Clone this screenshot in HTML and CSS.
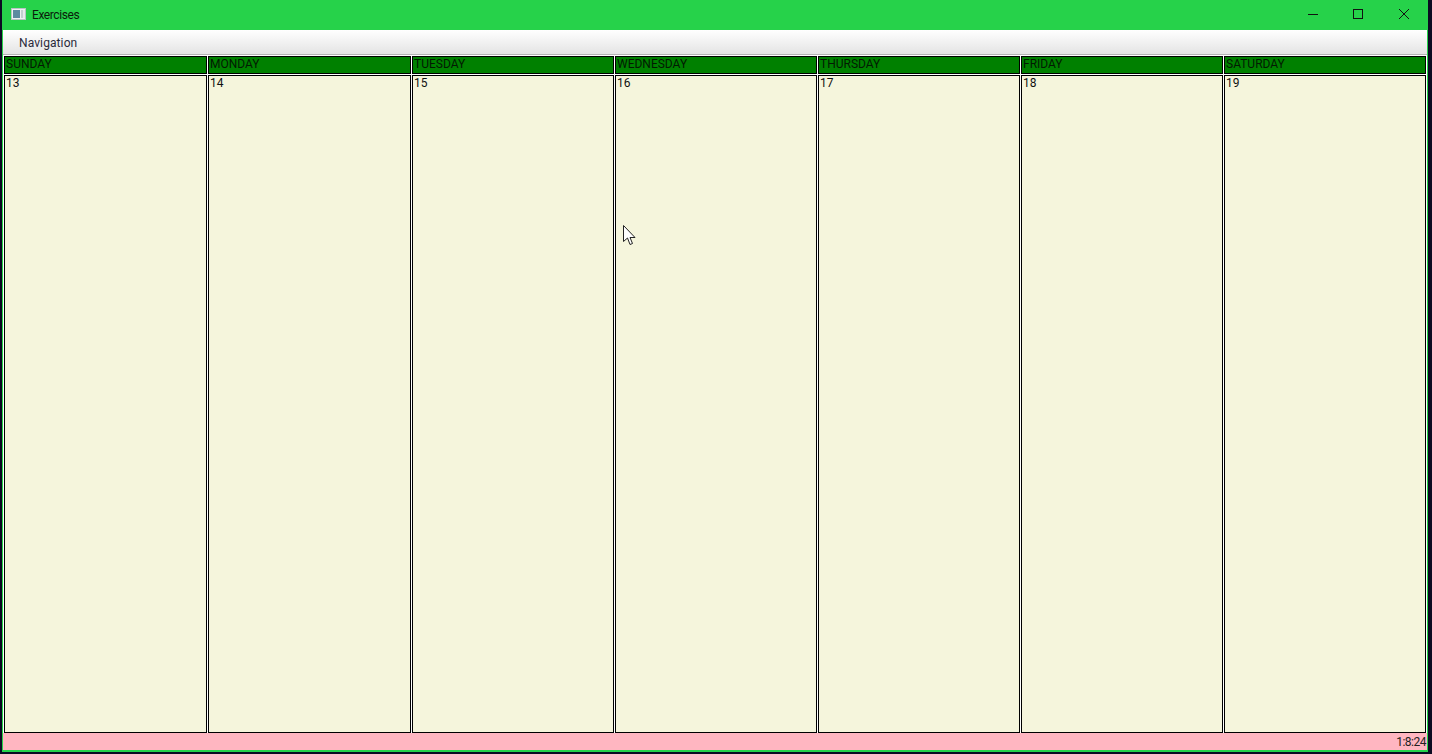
FILE: index.html
```html
<!DOCTYPE html>
<html lang="en">
<head>
<meta charset="utf-8">
<title>Exercises</title>
<link rel="stylesheet" href="styles.css">
</head>
<body>
<div class="window">
  <header class="titlebar">
    <svg class="app-icon" width="16" height="16" viewBox="0 0 16 16">
      <rect x="0.5" y="1.5" width="14" height="11" fill="#eef1f1" stroke="#b9c4c4"/>
      <rect x="2" y="3" width="7" height="8" fill="#5d8aa0"/>
      <rect x="10" y="3" width="2" height="8" fill="#c3cfcf"/>
      <rect x="12.5" y="3" width="1" height="8" fill="#dde4e4"/>
    </svg>
    <span class="title">Exercises</span>
    <div class="controls">
      <span class="control"><svg width="12" height="12" viewBox="0 0 12 12"><path d="M2 5.5h10" stroke="#111" fill="none"/></svg></span>
      <span class="control"><svg width="12" height="12" viewBox="0 0 12 12"><rect x="1.5" y="0.5" width="9" height="9" stroke="#111" fill="none"/></svg></span>
      <span class="control"><svg width="12" height="12" viewBox="0 0 12 12"><path d="M1 0l10 10M11 0L1 10" stroke="#111" fill="none"/></svg></span>
    </div>
  </header>
  <nav class="menubar"><span class="menu-item">Navigation</span></nav>
  <main class="calendar">
    <div class="day-col"><div class="day-head">SUNDAY</div><div class="day-cell">13</div></div>
    <div class="day-col"><div class="day-head">MONDAY</div><div class="day-cell">14</div></div>
    <div class="day-col"><div class="day-head">TUESDAY</div><div class="day-cell">15</div></div>
    <div class="day-col"><div class="day-head">WEDNESDAY</div><div class="day-cell">16</div></div>
    <div class="day-col"><div class="day-head">THURSDAY</div><div class="day-cell">17</div></div>
    <div class="day-col"><div class="day-head">FRIDAY</div><div class="day-cell">18</div></div>
    <div class="day-col"><div class="day-head">SATURDAY</div><div class="day-cell">19</div></div>
  </main>
  <footer class="statusbar">1:8:24</footer>
</div>
<svg class="cursor" width="13" height="21" viewBox="0 0 13 21">
  <path d="M0.5 0.5V16.5L4.5 13L7 19.5L9.5 18.5L7 12.5H12L0.5 0.5Z" fill="#fff" stroke="#222"/>
</svg>
</body>
</html>
```
FILE: styles.css
```css
* { box-sizing: border-box; }
html, body { height: 100%; }
body {
  margin: 0;
  background: #0b0b22;
  font-family: Roboto, "Open Sans", sans-serif;
  font-size: 12px;
  color: #111;
  overflow: hidden;
  position: relative;
}
.window {
  height: 752px;
  margin-left: 2px;
  width: 1426px;
  background: #26d24a;
  display: flex;
  flex-direction: column;
  padding: 0 1px 2px;
}
.titlebar {
  height: 30px;
  flex: none;
  display: flex;
  align-items: center;
  padding-left: 9px;
  margin: 0 -1px;
}
.app-icon { flex: none; }
.title { margin-left: 5px; line-height: 16px; color: #0a1a0a; letter-spacing: -0.4px; }
.controls { margin-left: auto; display: flex; margin-right: 1px; }
.control {
  width: 46px;
  height: 30px;
  display: flex;
  align-items: center;
  justify-content: center;
}
.menubar {
  height: 25px;
  flex: none;
  background: linear-gradient(#ffffff, #e4e4e4);
  border-bottom: 1px solid #b4b4b4;
  display: flex;
  align-items: center;
  padding: 1px 0 0 16px;
}
.menu-item { color: #2a2a3a; letter-spacing: 0.1px; }
.calendar {
  flex: 1;
  min-height: 0;
  background: #fff;
  display: grid;
  grid-template-columns: 203px 203px repeat(5, 202px);
  gap: 0 1px;
  padding: 1px 0 0 1px;
}
.day-col {
  display: flex;
  flex-direction: column;
  gap: 1px;
  min-width: 0;
}
.day-head {
  height: 18px;
  flex: none;
  background: #008000;
  border: 1px solid #000;
  line-height: 14px;
  padding-left: 1px;
  color: #031a03;
}
.day-cell {
  flex: 1;
  background: #f5f5dc;
  border: 1px solid #000;
  line-height: 14px;
  padding-left: 1px;
}
.statusbar {
  height: 17px;
  flex: none;
  background: #ffb6c1;
  text-align: right;
  line-height: 18px;
  padding-right: 1px;
  color: #222;
  letter-spacing: -0.5px;
}
.cursor {
  position: absolute;
  left: 623px;
  top: 225px;
}
```
